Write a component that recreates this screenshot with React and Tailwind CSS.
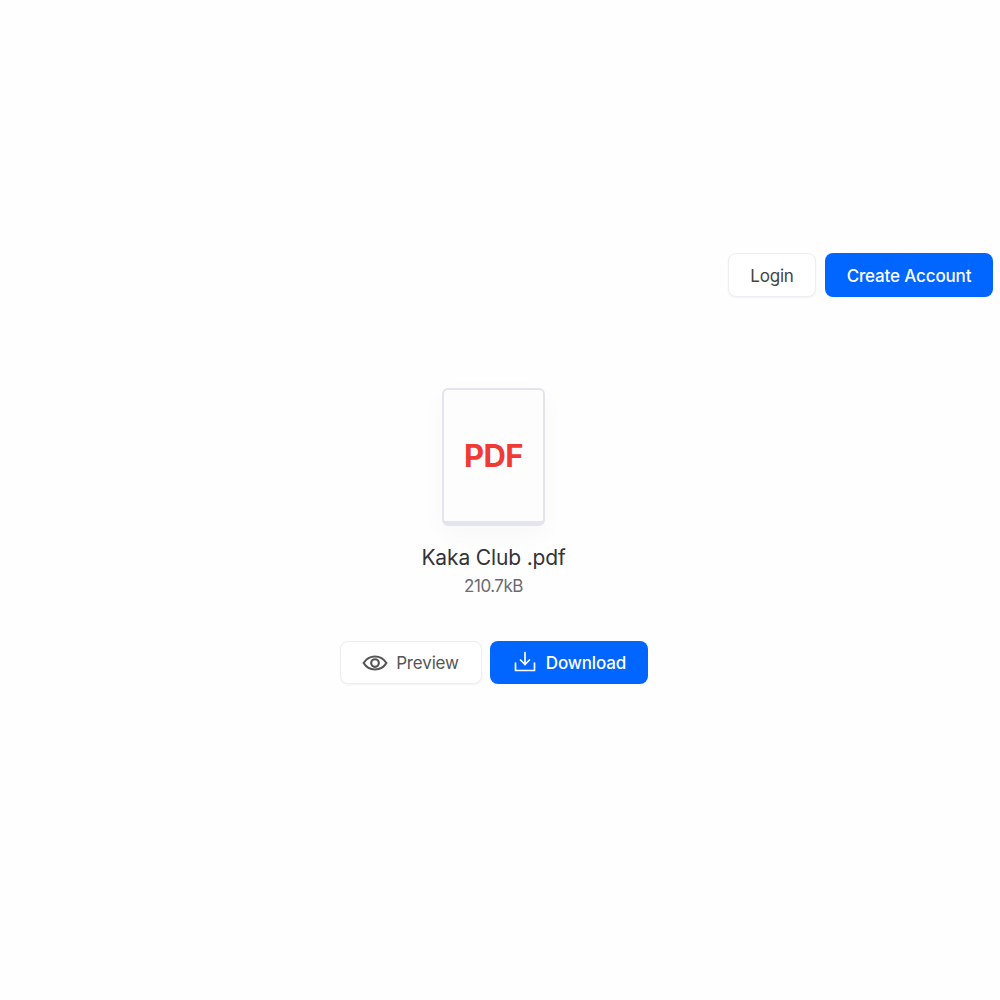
// App.jsx
export default function App() {
  return (
    <div className="min-h-[1000px] w-full bg-[#fefefe] pt-[253px] font-['Inter',sans-serif] text-[#33333a]">
      {/* Top actions */}
      <header className="flex justify-end gap-[9px] pr-[7px]">
        <button className="h-[44px] w-[88px] rounded-lg border border-[#eeeef2] bg-white pt-[3px] text-[17px] tracking-[-0.2px] text-[#444] shadow-[0_1px_2px_rgba(0,0,0,0.05)]">
          Login
        </button>
        <button className="h-[44px] w-[168px] rounded-lg bg-[#0066ff] pt-[3px] text-[17px] font-medium tracking-[-0.15px] text-white">
          Create Account
        </button>
      </header>

      <main className="mt-[91px] flex w-[987px] flex-col items-center">
        {/* File thumbnail */}
        <div className="flex h-[138px] w-[103px] items-center justify-center rounded-md border-2 border-b-[5px] border-[#e4e4ec] bg-[#fdfdfd] pt-[2px] shadow-[0_8px_24px_rgba(0,0,0,0.03)]">
          <span className="text-[31px] font-bold tracking-[-0.6px] text-[#f03a35]">PDF</span>
        </div>

        <h1 className="mt-[18px] text-[21px] leading-[28px] tracking-[-0.15px] text-[#33333a]">Kaka Club .pdf</h1>
        <p className="mt-[2px] text-[17px] leading-[24px] tracking-[-0.5px] text-[#6b6b70]">210.7kB</p>

        {/* File actions */}
        <div className="mt-[43px] flex gap-[8px]">
          <button className="flex h-[43px] w-[142px] items-center justify-center gap-[8px] rounded-lg border border-[#eeeef2] bg-white text-[17px] tracking-[-0.15px] text-[#555] shadow-[0_1px_2px_rgba(0,0,0,0.05)]">
            <svg width="26" height="26" viewBox="0 0 24 24" fill="none" stroke="currentColor" strokeWidth="2" strokeLinecap="round" strokeLinejoin="round">
              <path d="M1.500 12C4 8 7.500 6 12 6S20 8 22.500 12C20 16 16.500 18 12 18S4 16 1.500 12Z" />
              <circle cx="12" cy="12" r="3.500" />
            </svg>
            <span className="pt-[2px]">Preview</span>
          </button>
          <button className="flex h-[43px] w-[158px] items-center justify-center gap-[9px] rounded-lg bg-[#0066ff] pl-[2px] text-[17px] font-medium tracking-[-0.15px] text-white">
            <svg width="24" height="24" viewBox="0 0 24 24" fill="none" stroke="currentColor" strokeWidth="1.700" strokeLinecap="round" strokeLinejoin="round">
              <path d="M12 1.500V13.500" />
              <path d="M7.500 9L12 13.500L16.500 9" />
              <path d="M2.500 12V19.500H21.500V12" />
            </svg>
            <span className="pt-[2px]">Download</span>
          </button>
        </div>
      </main>
    </div>
  );
}
